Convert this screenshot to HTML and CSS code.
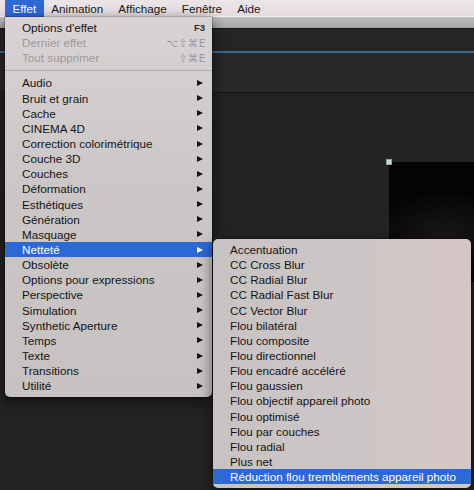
FILE: index.html
```html
<!DOCTYPE html>
<html lang="fr">
<head>
<meta charset="utf-8">
<title>Effet menu</title>
<link rel="stylesheet" href="styles.css">
</head>
<body>
<div class="screen">
  <nav class="menubar">
    <span class="mb-item active">Effet</span>
    <span class="mb-item">Animation</span>
    <span class="mb-item">Affichage</span>
    <span class="mb-item">Fenêtre</span>
    <span class="mb-item">Aide</span>
  </nav>
  <div class="app">
    <div class="toolbar"></div>
    <div class="panel-head"></div>
    <div class="panel-line"></div>
    <div class="panel-area"></div>
    <div class="viewer">
      <div class="canvas"><span class="handle"></span></div>
    </div>
  </div>

  <div class="menu main-menu">
    <div class="item"><span class="label">Options d'effet</span><span class="key key-f3">F3</span></div>
    <div class="item disabled"><span class="label">Dernier effet</span><span class="key">⌥⇧⌘E</span></div>
    <div class="item disabled"><span class="label">Tout supprimer</span><span class="key">⇧⌘E</span></div>
    <div class="sep"></div>
    <div class="item sub"><span class="label">Audio</span><span class="arrow"></span></div>
    <div class="item sub"><span class="label">Bruit et grain</span><span class="arrow"></span></div>
    <div class="item sub"><span class="label">Cache</span><span class="arrow"></span></div>
    <div class="item sub"><span class="label">CINEMA 4D</span><span class="arrow"></span></div>
    <div class="item sub"><span class="label">Correction colorimétrique</span><span class="arrow"></span></div>
    <div class="item sub"><span class="label">Couche 3D</span><span class="arrow"></span></div>
    <div class="item sub"><span class="label">Couches</span><span class="arrow"></span></div>
    <div class="item sub"><span class="label">Déformation</span><span class="arrow"></span></div>
    <div class="item sub"><span class="label">Esthétiques</span><span class="arrow"></span></div>
    <div class="item sub"><span class="label">Génération</span><span class="arrow"></span></div>
    <div class="item sub"><span class="label">Masquage</span><span class="arrow"></span></div>
    <div class="item sub selected open"><span class="label">Netteté</span><span class="arrow"></span>
      <div class="menu submenu">
        <div class="item"><span class="label">Accentuation</span></div>
        <div class="item"><span class="label">CC Cross Blur</span></div>
        <div class="item"><span class="label">CC Radial Blur</span></div>
        <div class="item"><span class="label">CC Radial Fast Blur</span></div>
        <div class="item"><span class="label">CC Vector Blur</span></div>
        <div class="item"><span class="label">Flou bilatéral</span></div>
        <div class="item"><span class="label">Flou composite</span></div>
        <div class="item"><span class="label">Flou directionnel</span></div>
        <div class="item"><span class="label">Flou encadré accéléré</span></div>
        <div class="item"><span class="label">Flou gaussien</span></div>
        <div class="item"><span class="label">Flou objectif appareil photo</span></div>
        <div class="item"><span class="label">Flou optimisé</span></div>
        <div class="item"><span class="label">Flou par couches</span></div>
        <div class="item"><span class="label">Flou radial</span></div>
        <div class="item"><span class="label">Plus net</span></div>
        <div class="item selected"><span class="label">Réduction flou tremblements appareil photo</span></div>
      </div>
    </div>
    <div class="item sub"><span class="label">Obsolète</span><span class="arrow"></span></div>
    <div class="item sub"><span class="label">Options pour expressions</span><span class="arrow"></span></div>
    <div class="item sub"><span class="label">Perspective</span><span class="arrow"></span></div>
    <div class="item sub"><span class="label">Simulation</span><span class="arrow"></span></div>
    <div class="item sub"><span class="label">Synthetic Aperture</span><span class="arrow"></span></div>
    <div class="item sub"><span class="label">Temps</span><span class="arrow"></span></div>
    <div class="item sub"><span class="label">Texte</span><span class="arrow"></span></div>
    <div class="item sub"><span class="label">Transitions</span><span class="arrow"></span></div>
    <div class="item sub"><span class="label">Utilité</span><span class="arrow"></span></div>
  </div>
</div>
</body>
</html>
```

FILE: styles.css
```css
* { box-sizing: border-box; }

html, body {
  margin: 0;
  padding: 0;
  background: #242424;
}

.screen {
  position: relative;
  width: 474px;
  height: 490px;
  overflow: hidden;
  font-family: "Liberation Sans", Arial, sans-serif;
  font-size: 11.7px;
  color: #141414;
}

/* ---------- menu bar ---------- */
.menubar {
  display: flex;
  height: 17px;
  padding-left: 5px;
  background: linear-gradient(#ece5e8, #e3dbde);
  border-bottom: 1px solid #f4f0f2;
}

.mb-item {
  padding: 0 7.5px;
  line-height: 17px;
  height: 17px;
  color: #1a1a1a;
}

.mb-item.active {
  background: #2d69d6;
  color: #ffffff;
}

/* ---------- background application ---------- */
.app {
  display: flex;
  flex-direction: column;
  height: 472px;
}

.toolbar {
  height: 12px;
  background: linear-gradient(#c0bfbf, #a6a6a6);
  border-bottom: 1px solid #151515;
}

.panel-head {
  height: 22px;
  background: #252525;
}

.panel-line {
  height: 2px;
  background: #3b6992;
}

.panel-area {
  height: 40px;
  background: #282828;
  border-bottom: 1px solid #141414;
}

.viewer {
  flex: 1;
  background: #232323;
  padding: 69px 0 0 389px;
}

.canvas {
  position: relative;
  height: 120px;
  background:
    radial-gradient(ellipse 80px 50px at 65% 65%, rgba(62, 57, 52, 0.4), rgba(0, 0, 0, 0) 100%),
    #040404;
}

.handle {
  position: absolute;
  left: -3px;
  top: -3px;
  width: 6px;
  height: 6px;
  background: #c9dcd7;
  border: 1px solid #8fa6a0;
}

/* ---------- menus ---------- */
.menu {
  position: absolute;
  box-shadow: 0 4px 14px rgba(0, 0, 0, 0.6), 0 0 0 0.5px rgba(0, 0, 0, 0.4);
}

.main-menu {
  left: 5px;
  top: 17px;
  width: 207px;
  height: 380px;
  padding: 3px 0 3.5px;
  border-radius: 0 0 5px 5px;
  background: linear-gradient(#d9d3d3, #cbc7c7 45%, #c6c2c2);
}

.submenu {
  left: 208px;
  top: -2.5px;
  width: 258px;
  padding: 2.5px 0 4px;
  border-radius: 5px;
  background: linear-gradient(to right, #c8c3c3, #cdc6c6 55%, #d5c5c5);
}

.item {
  position: relative;
  display: flex;
  align-items: center;
  height: 15.15px;
  padding: 0 6px 0 17px;
  white-space: nowrap;
}

.item .label {
  flex: 1;
}

.item.disabled {
  color: #9d9898;
}

.item.selected {
  background: #2d69d6;
  color: #ffffff;
}

.submenu .item {
  color: #141414;
}

.submenu .item.selected {
  color: #ffffff;
}

.key {
  font-family: "DejaVu Sans", sans-serif;
  font-size: 10.5px;
  letter-spacing: 0.5px;
}

.key-f3 {
  font-family: "Liberation Sans", Arial, sans-serif;
  font-weight: bold;
  font-size: 9.5px;
  letter-spacing: 0;
  color: #2a2a2a;
  margin-right: 1px;
}

.sep {
  height: 10px;
  display: flex;
  align-items: center;
}

.sep::before {
  content: "";
  flex: 1;
  height: 1px;
  background: #b5b0b0;
}

.arrow {
  width: 0;
  height: 0;
  margin-right: 3px;
  border-top: 3.5px solid transparent;
  border-bottom: 3.5px solid transparent;
  border-left: 6px solid #141414;
}

.item.selected > .arrow {
  border-left-color: #ffffff;
}
```
